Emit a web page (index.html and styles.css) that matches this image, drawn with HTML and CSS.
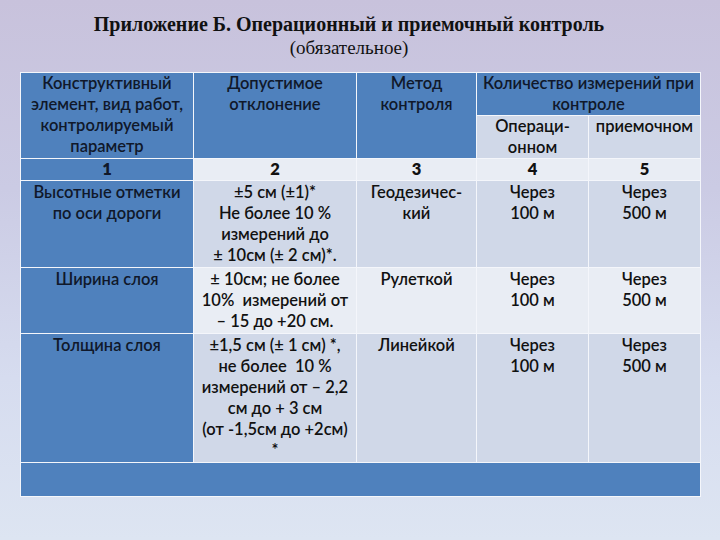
FILE: index.html
```html
<!DOCTYPE html>
<html lang="ru">
<head>
<meta charset="utf-8">
<title>Приложение Б</title>
<link rel="stylesheet" href="styles.css">
</head>
<body>
<div class="page">
  <header class="title">
    <div class="title-main">Приложение Б. Операционный и приемочный контроль</div>
    <div class="title-sub">(обязательное)</div>
  </header>
  <table class="grid">
    <colgroup>
      <col class="c1"><col class="c2"><col class="c3"><col class="c4"><col class="c5">
    </colgroup>
    <tr class="hrow">
      <td class="blue" rowspan="2">Конструктивный элемент, вид работ, контролируемый параметр</td>
      <td class="blue" rowspan="2">Допустимое отклонение</td>
      <td class="blue" rowspan="2">Метод контроля</td>
      <td class="blue" colspan="2">Количество измерений при контроле</td>
    </tr>
    <tr class="hrow">
      <td class="dark">Операци-онном</td>
      <td class="dark">приемочном</td>
    </tr>
    <tr class="num">
      <td class="blue">1</td>
      <td class="light">2</td>
      <td class="light">3</td>
      <td class="light">4</td>
      <td class="light">5</td>
    </tr>
    <tr>
      <td class="blue">Высотные отметки<br>по оси дороги</td>
      <td class="dark">±5 см (±1)*<br>Не более 10 %<br>измерений до<br>± 10см (± 2 см)*.</td>
      <td class="dark">Геодезичес-<br>кий</td>
      <td class="dark">Через<br>100 м</td>
      <td class="dark">Через<br>500 м</td>
    </tr>
    <tr>
      <td class="blue">Ширина слоя</td>
      <td class="light">± 10см; не более<br>10%&nbsp; измерений от<br>– 15 до +20 см.</td>
      <td class="light">Рулеткой</td>
      <td class="light">Через<br>100 м</td>
      <td class="light">Через<br>500 м</td>
    </tr>
    <tr>
      <td class="blue">Толщина слоя</td>
      <td class="dark">±1,5 см (± 1 см) *,<br>не более&nbsp; 10 %<br>измерений от – 2,2<br>см до + 3 см<br>(от -1,5см до +2см)<br>*</td>
      <td class="dark">Линейкой</td>
      <td class="dark">Через<br>100 м</td>
      <td class="dark">Через<br>500 м</td>
    </tr>
    <tr class="empty">
      <td class="blue" colspan="5"></td>
    </tr>
  </table>
</div>
</body>
</html>
```
FILE: styles.css
```css
html, body {
  margin: 0;
  padding: 0;
}
body {
  width: 720px;
  height: 540px;
  overflow: hidden;
  background: linear-gradient(180deg, #c8c2dc 0%, #cbcbe4 35%, #d6dcef 70%, #dde5f2 100%);
  font-family: Lato, "Liberation Sans", sans-serif;
}
.page {
  padding: 13px 0 0 20px;
}
.title {
  height: 59px;
  padding-right: 42px;
  text-align: center;
  font-family: "Liberation Serif", serif;
  color: #111;
}
.title-main {
  font-weight: bold;
  font-size: 20px;
  line-height: 23px;
}
.title-sub {
  font-size: 19px;
  line-height: 23px;
}
.grid {
  width: 680px;
  table-layout: fixed;
  border-collapse: collapse;
  font-size: 16.5px;
  line-height: 21px;
  color: #111;
  font-weight: 600;
}
.c1 { width: 173px; }
.c2 { width: 163px; }
.c3 { width: 120px; }
.c4 { width: 112px; }
.c5 { width: 112px; }
.grid td {
  border: 1.5px solid #f4f6fb;
  text-align: center;
  vertical-align: top;
  padding: 1px 0;
  white-space: nowrap;
}
.grid .hrow td {
  padding: 0;
  white-space: normal;
}
.grid .num td {
  font-weight: 800;
  padding: 0;
}
.blue {
  background: #4f81bd;
  color: #10182a;
}
.dark {
  background: #d0d8e8;
}
.light {
  background: #e9edf4;
}
.grid .empty td {
  height: 33px;
  padding: 0;
}
```
